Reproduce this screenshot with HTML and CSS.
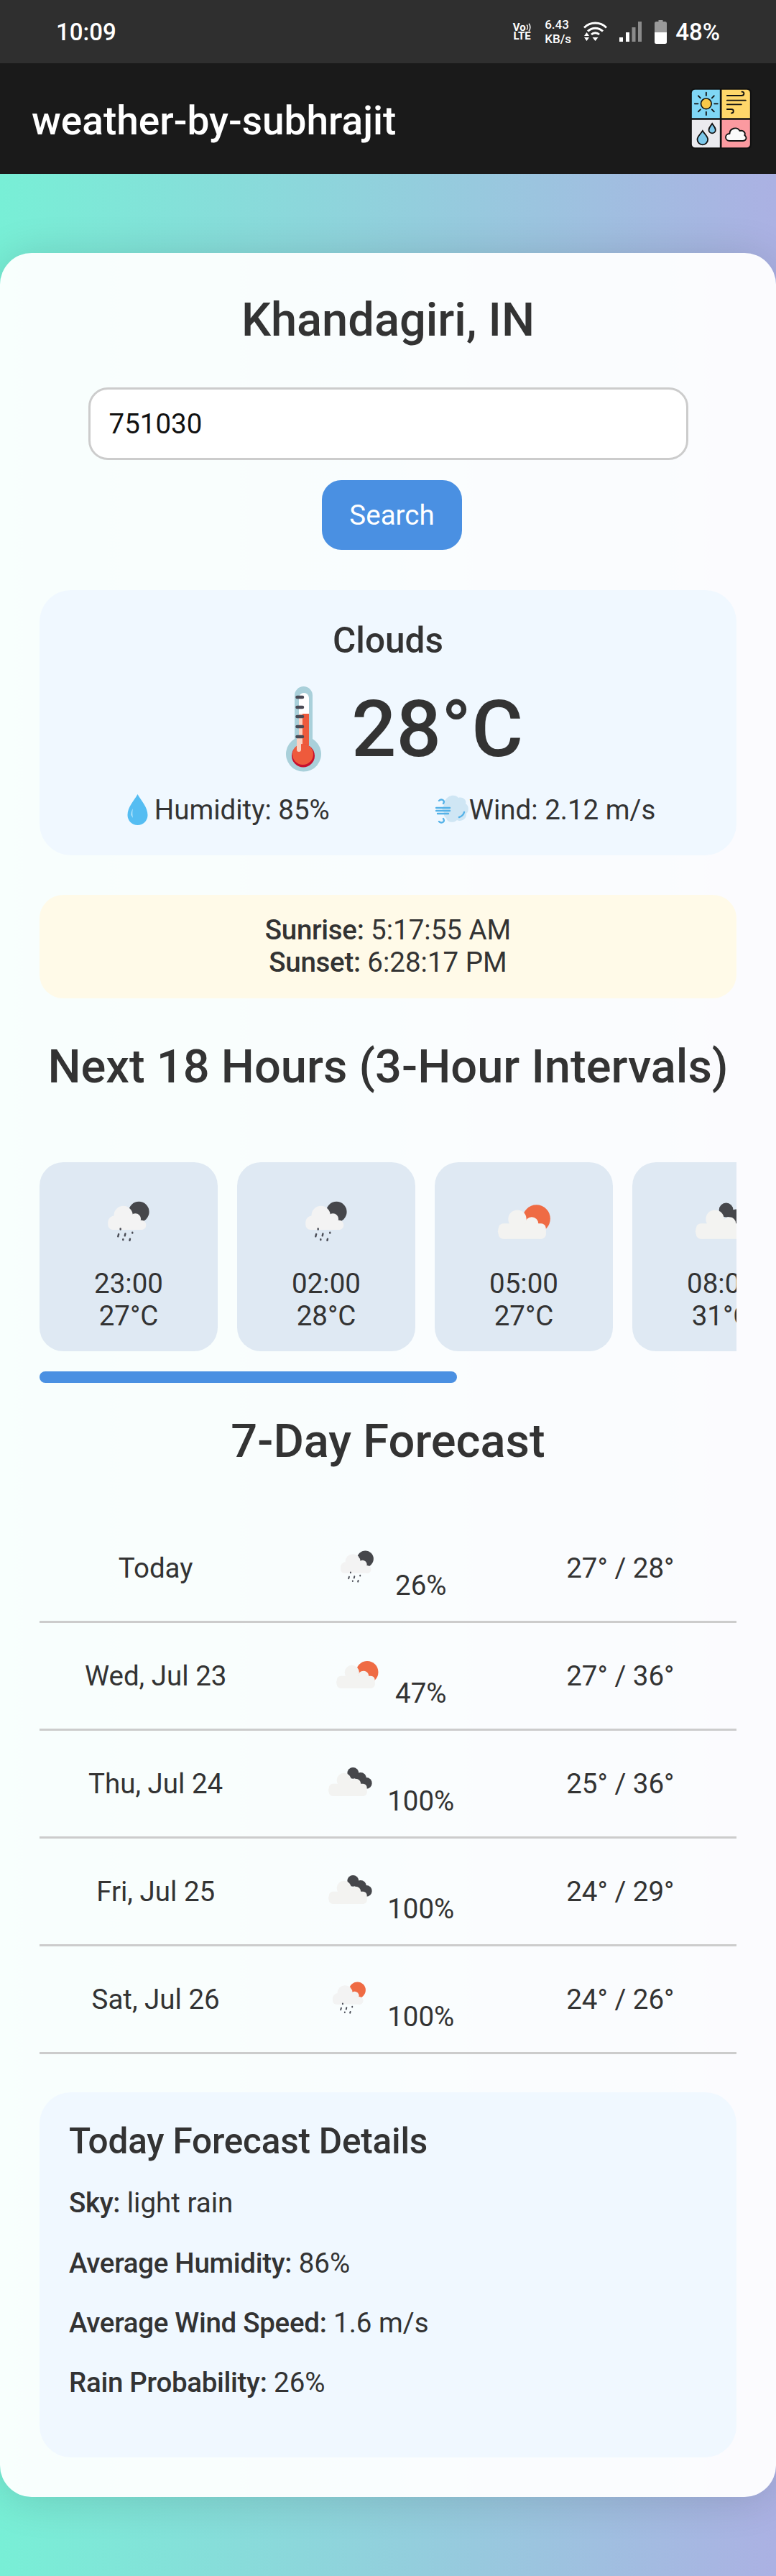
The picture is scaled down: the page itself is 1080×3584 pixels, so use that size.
FILE: index.html
```html
<!DOCTYPE html>
<html lang="en">
<head>
<meta charset="utf-8">
<title>weather-by-subhrajit</title>
<link rel="stylesheet" href="styles.css">
</head>
<body>
<svg class="defs" width="0" height="0" aria-hidden="true">
  <defs>
    <g id="cloud-big">
      <circle cx="41.8" cy="46.4" r="11.5"/><circle cx="60" cy="52.4" r="8.5"/><circle cx="26.7" cy="62" r="9.5"/><circle cx="70.6" cy="64" r="7.5"/>
      <rect x="18" y="52" width="60" height="19.5" rx="6"/>
    </g>
    <g id="cloud-small">
      <circle cx="43.3" cy="41.8" r="12"/><circle cx="58.5" cy="46.4" r="7"/><circle cx="32.7" cy="51" r="9"/><circle cx="66" cy="54" r="6"/>
      <rect x="24" y="48" width="48" height="12" rx="6"/>
    </g>
    <g id="drops" stroke="#4a4c55" stroke-width="2.2" stroke-linecap="round">
      <path d="M39.7 58.5v1M37.4 65.5l-.8 3M45.8 65l-.6 2.6M54.8 63.4v.8M43 72v.8M51.8 71.5l-.5 2"/>
    </g>
    <symbol id="i-rain-night" viewBox="0 0 100 100"><circle cx="63" cy="37.3" r="13" fill="#46474b"/><use href="#cloud-small" fill="#f3f3f3"/><use href="#drops"/></symbol>
    <symbol id="i-rain-day" viewBox="0 0 100 100"><circle cx="63" cy="37.3" r="13" fill="#ef6b44"/><use href="#cloud-small" fill="#f3f3f3"/><use href="#drops"/></symbol>
    <symbol id="i-few" viewBox="0 0 100 100"><circle cx="66" cy="46" r="17.5" fill="#ef6b44"/><use href="#cloud-big" fill="#f3f3f1"/></symbol>
    <symbol id="i-broken" viewBox="0 0 100 100"><g fill="#46474b"><circle cx="56" cy="35" r="9"/><circle cx="68" cy="43" r="9"/><circle cx="77" cy="51" r="9"/></g><use href="#cloud-big" fill="#f3f3f1"/></symbol>
  </defs>
</svg>

<header class="statusbar">
  <span class="clock">10:09</span>
  <div class="status-right">
    <span class="volte"><span class="vo">Vo<svg class="vo-arcs" width="8" height="12" viewBox="0 0 8 12"><path d="M1 2.5a5 5 0 0 1 0 7M4 .8a8 8 0 0 1 0 10.4" fill="none" stroke="#fff" stroke-width="1.4"/></svg></span><span>LTE</span></span>
    <span class="speed"><span>6.43</span><span>KB/s</span></span>
    <svg class="wifi" width="33" height="28" viewBox="0 0 33 28">
      <path d="M1 8.5a22 22 0 0 1 31 0M6 13.5a15 15 0 0 1 21 0M11 18a8 8 0 0 1 11 0" fill="none" stroke="#fff" stroke-width="3"/>
      <path d="M4.500 15l3.500 5h-7zM4.500 27l-3.500-5h7zM16.500 27l-4-5h8z" fill="#fff"/>
    </svg>
    <svg class="signal" width="31" height="28" viewBox="0 0 31 28">
      <rect x="0" y="22" width="5" height="6" fill="#fff"/><rect x="9" y="15" width="5" height="13" fill="#fff"/><rect x="17.500" y="8" width="5" height="20" fill="#8b8b8b"/><rect x="26" y="0" width="5" height="28" fill="#8b8b8b"/>
    </svg>
    <svg class="battery" width="17" height="33" viewBox="0 0 17 33">
      <path d="M5.500 0h6v2h3a2.500 2.500 0 0 1 2.500 2.500V17H0V4.500A2.500 2.500 0 0 1 2.500 2h3z" fill="#9a9a9a"/>
      <path d="M0 17h17v13.500a2.500 2.500 0 0 1-2.500 2.500h-12A2.500 2.500 0 0 1 0 30.500z" fill="#fff"/>
    </svg>
    <span class="pct">48%</span>
  </div>
</header>

<header class="appbar">
  <span class="app-title">weather-by-subhrajit</span>
  <svg class="logo" width="87" height="86" viewBox="0 0 260 258">
    <rect x="3" y="3" width="254" height="252" rx="16" fill="#111"/>
    <path d="M8 22a14 14 0 0 1 14-14h103v119H8z" fill="#7fd6f5"/>
    <path d="M133 8h104a14 14 0 0 1 14 14v105H133z" fill="#ffd76a"/>
    <path d="M8 134h117v116H22a14 14 0 0 1-14-14z" fill="#ebebef"/>
    <path d="M133 134h118v102a14 14 0 0 1-14 14H133z" fill="#fb9aa0"/>
    <circle cx="68" cy="67" r="22" fill="#f7c948" stroke="#111" stroke-width="5"/>
    <path d="M68 33V20M68 101v13M34 67H20M102 67h14M44 43l-9-9M92 43l9-9M44 91l-9 9M92 91l9 9" stroke="#111" stroke-width="5.500" stroke-linecap="round"/>
    <path d="M155 33h60c14 0 14-16 2-16M155 53h78M155 70h60M155 90h18c12 0 12 16 0 16" fill="none" stroke="#111" stroke-width="5.500" stroke-linecap="round"/>
    <path d="M53 180c-12 18-22 24-22 36a22 22 0 0 0 44 0c0-12-10-18-22-36z" fill="#7cc8ea" stroke="#111" stroke-width="5.500"/>
    <path d="M93 150c-7 11-14 16-14 26a14 14 0 0 0 28 0c0-10-7-15-14-26z" fill="#7cc8ea" stroke="#111" stroke-width="5.500"/>
    <path d="M166 222c-22 0-22-30 0-30 0-22 30-32 42-12 16-4 26 10 20 18 12 8 8 24-8 24z" fill="#fafafa" stroke="#111" stroke-width="5.500" stroke-linejoin="round"/>
  </svg>
</header>

<main class="card">
  <h1 class="city">Khandagiri, IN</h1>
  <form class="search">
    <input class="search-input" type="text" value="751030">
    <button class="search-btn" type="button">Search</button>
  </form>

  <section class="current">
    <h2 class="sky">Clouds</h2>
    <div class="temp">
      <svg class="thermo" width="49" height="120" viewBox="0 0 49 120">
        <path d="M12 12.500a12.500 12.500 0 0 1 25 0V73a24.500 24.500 0 1 1-25 0z" fill="#a9d0da"/>
        <path d="M18 16a7 7 0 0 1 14 0v62H18z" fill="#fff"/>
        <rect x="18" y="38" width="5" height="44" fill="#fbd0c0"/>
        <rect x="23" y="38" width="9" height="44" fill="#ee5a3c"/>
        <circle cx="24" cy="96.500" r="16" fill="#c8102e"/>
        <circle cx="23.500" cy="94.500" r="14.500" fill="#ee5a3c"/>
        <path d="M18 74v14" stroke="#fbd0c0" stroke-width="6" stroke-linecap="round"/>
        <path d="M15.500 15H23M15.500 29H23M15.500 42H23M15.500 56H23M15.500 70H23" stroke="#4a4a55" stroke-width="4.500" stroke-linecap="round"/>
      </svg>
      <span class="temp-value">28°C</span>
    </div>
    <div class="stats">
      <span class="stat">
        <svg class="emoji" width="47" height="44" viewBox="0 0 47 44"><path d="M23.500 0c-5 9-14 18-14 29a14 14 0 0 0 28 0c0-11-9-20-14-29z" fill="#55bdf2"/><path d="M14.500 29c0-4 1-7 2.500-9-1 4-1 8 0 13z" fill="#b9e6fb"/></svg>
        <span>Humidity: 85%</span>
      </span>
      <span class="stat">
        <svg class="emoji" width="47" height="44" viewBox="0 0 47 44"><path d="M14 8c3-6 13-9 18-3 6-2 12 3 10 8 5 3 5 11 1 14 1 7-7 12-13 9-5 5-14 3-15-3-4-2-3-5-3-7l-3-6 3-5c-1-3 0-6 2-7z" fill="#cfe6f4"/><path d="M1 19h19M1 23h19M3 27h15M5 9c3-3 9-1 6 4M5 38c3 3 9 1 6-4M33 32c3-1 6-3 7-7" fill="none" stroke="#55b2e8" stroke-width="2.400" stroke-linecap="round"/></svg>
        <span>Wind: 2.12 m/s</span>
      </span>
    </div>
  </section>

  <section class="sun">
    <p class="sun-line"><strong>Sunrise:</strong> 5:17:55 AM</p>
    <p class="sun-line"><strong>Sunset:</strong> 6:28:17 PM</p>
  </section>

  <h2 class="section-title hours-title">Next 18 Hours (3-Hour Intervals)</h2>
  <div class="hours">
    <div class="hour"><svg class="hour-icon" viewBox="0 0 100 100"><use href="#i-rain-night"/></svg><span>23:00</span><span>27°C</span></div>
    <div class="hour"><svg class="hour-icon" viewBox="0 0 100 100"><use href="#i-rain-night"/></svg><span>02:00</span><span>28°C</span></div>
    <div class="hour"><svg class="hour-icon" viewBox="0 0 100 100"><use href="#i-few"/></svg><span>05:00</span><span>27°C</span></div>
    <div class="hour"><svg class="hour-icon" viewBox="0 0 100 100"><use href="#i-broken"/></svg><span>08:00</span><span>31°C</span></div>
  </div>
  <div class="scroll-thumb"></div>

  <h2 class="section-title week-title">7-Day Forecast</h2>
  <div class="week">
    <div class="day"><span class="day-name">Today</span><span class="day-rain"><svg class="day-icon" viewBox="0 0 100 100"><use href="#i-rain-night"/></svg><span>26%</span></span><span class="day-temp">27° / 28°</span></div>
    <div class="day"><span class="day-name">Wed, Jul 23</span><span class="day-rain"><svg class="day-icon" viewBox="0 0 100 100"><use href="#i-few"/></svg><span>47%</span></span><span class="day-temp">27° / 36°</span></div>
    <div class="day"><span class="day-name">Thu, Jul 24</span><span class="day-rain"><svg class="day-icon" viewBox="0 0 100 100"><use href="#i-broken"/></svg><span>100%</span></span><span class="day-temp">25° / 36°</span></div>
    <div class="day"><span class="day-name">Fri, Jul 25</span><span class="day-rain"><svg class="day-icon" viewBox="0 0 100 100"><use href="#i-broken"/></svg><span>100%</span></span><span class="day-temp">24° / 29°</span></div>
    <div class="day"><span class="day-name">Sat, Jul 26</span><span class="day-rain"><svg class="day-icon" viewBox="0 0 100 100"><use href="#i-rain-day"/></svg><span>100%</span></span><span class="day-temp">24° / 26°</span></div>
  </div>

  <section class="details">
    <h3 class="details-title">Today Forecast Details</h3>
    <p class="detail"><strong>Sky:</strong> light rain</p>
    <p class="detail"><strong>Average Humidity:</strong> 86%</p>
    <p class="detail"><strong>Average Wind Speed:</strong> 1.6 m/s</p>
    <p class="detail"><strong>Rain Probability:</strong> 26%</p>
  </section>
</main>
</body>
</html>
```

FILE: styles.css
```css
* { box-sizing: border-box; }
html, body { margin: 0; padding: 0; }
body {
  width: 1080px;
  min-height: 3584px;
  font-family: Roboto, "Liberation Sans", sans-serif;
  font-size: 38.5px;
  color: #333;
  background: linear-gradient(90deg, #78efd6, #abb1e3);
}
.defs { position: absolute; }
strong { font-weight: 500; letter-spacing: -0.3px; }
p, h1, h2, h3 { margin: 0; }

.statusbar {
  height: 88px;
  background: #2f2f2f;
  color: #fff;
  display: flex;
  align-items: center;
  justify-content: space-between;
  padding: 0 78px;
}
.clock { font-size: 33px; font-weight: 500; }
.status-right { display: flex; align-items: center; }
.volte, .speed { display: flex; flex-direction: column; font-weight: 700; }
.volte { font-size: 15px; line-height: 13px; width: 27px; align-items: center; }
.vo { display: flex; align-items: center; line-height: 12px; }
.speed { font-size: 17px; line-height: 20px; margin-left: 18px; width: 40px; white-space: nowrap; font-weight: 500; }
.wifi { margin-left: 14px; }
.signal { margin-left: 17px; }
.battery { margin-left: 18px; }
.pct { font-size: 33px; font-weight: 500; margin-left: 12px; }

.appbar {
  height: 154px;
  background: #1a1a1a;
  color: #fff;
  display: flex;
  align-items: center;
  justify-content: space-between;
  padding: 0 33px 0 44px;
}
.app-title { font-size: 55px; font-weight: 500; padding-top: 6px; }
.logo { display: block; }

.card {
  margin-top: 110px;
  padding: 55px;
  border-radius: 44px;
  background: rgba(255, 255, 255, 0.95);
  box-shadow: 0 4px 60px rgba(0, 0, 0, 0.14);
}
.city { font-size: 65px; font-weight: 500; text-align: center; line-height: 77px; margin-bottom: 55px; }
.search { display: flex; flex-direction: column; align-items: center; }
.search-input {
  width: 835px;
  height: 101px;
  padding: 0 26px;
  border: 3px solid #ccc;
  border-radius: 27px;
  background: #fff;
  font: 400 38.5px Roboto, sans-serif;
  color: #111;
}
.search-btn {
  width: 195px;
  height: 97px;
  margin: 28px 0 0 11px;
  border: 0;
  border-radius: 27px;
  background: #4a90e2;
  color: #fff;
  font: 400 38.5px Roboto, sans-serif;
}

.current {
  margin-top: 56px;
  padding: 41px;
  border-radius: 44px;
  background: #f0f8ff;
  text-align: center;
}
.sky { font-size: 49.5px; font-weight: 500; line-height: 58px; }
.temp { display: flex; align-items: center; justify-content: center; margin-top: 30px; height: 129px; }
.thermo { margin: 0 42px 0 46px; }
.temp-value { font-size: 110px; font-weight: 500; line-height: 129px; }
.stats { display: flex; justify-content: center; gap: 147px; margin-top: 25px; }
.stat { display: flex; align-items: center; }
.emoji { display: block; }

.sun {
  margin-top: 55px;
  padding: 26px 27.5px 28px;
  border-radius: 33px;
  background: #fffae8;
  text-align: center;
}

.section-title { font-size: 65px; font-weight: 500; line-height: 77px; text-align: center; }
.hours-title { margin-top: 57px; }
.hours { display: flex; gap: 27px; margin-top: 94px; overflow: hidden; }
.hour {
  flex: 0 0 248px;
  display: flex;
  flex-direction: column;
  align-items: center;
  padding: 27.5px 0;
  border-radius: 33px;
  background: #dfe9f3;
}
.hour-icon { width: 110px; height: 110px; margin-bottom: 8px; }
.scroll-thumb { width: 581px; height: 16px; margin-top: 28px; border-radius: 8px; background: #4a90e2; }
.week-title { margin-top: 43px; }

.week { margin-top: 64px; }
.day {
  display: grid;
  grid-template-columns: 1fr 1fr 1fr;
  align-items: center;
  height: 150px;
  border-bottom: 3px solid #ccc;
  text-align: center;
}
.day-rain { display: flex; align-items: flex-end; justify-content: center; gap: 9.5px; padding-right: 6px; height: 92px; }
.day-icon { width: 88px; height: 88px; flex: none; margin-bottom: 4px; }

.details {
  margin-top: 53px;
  padding: 39px 41px 41px;
  height: 508px;
  border-radius: 44px;
  background: #f0f8ff;
}
.details-title { font-size: 49.5px; font-weight: 500; line-height: 58px; letter-spacing: -0.2px; margin-bottom: 15px; }
.detail { line-height: 45px; padding: 19.2px 0; }
```
